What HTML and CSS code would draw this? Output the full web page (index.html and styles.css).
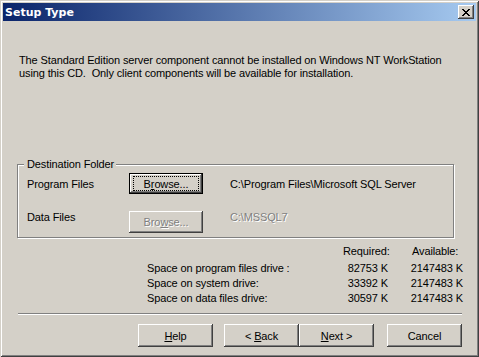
FILE: index.html
```html
<!DOCTYPE html>
<html lang="en">
<head>
    <meta charset="UTF-8">
    <title>Setup Type</title>
    <link rel="stylesheet" href="styles.css">
</head>
<body>
    <div class="window">
        <div class="titlebar">
            <span class="title">Setup Type</span>
            <span class="close">
                <svg width="8" height="7" viewBox="0 0 8 7" shape-rendering="crispEdges">
                    <path d="M0 0h2v1h-2zM6 0h2v1h-2zM1 1h2v1h-2zM5 1h2v1h-2zM2 2h4v1h-4zM3 3h2v1h-2zM2 4h4v1h-4zM1 5h2v1h-2zM5 5h2v1h-2zM0 6h2v1h-2zM6 6h2v1h-2z" fill="#000"/>
                </svg>
            </span>
        </div>

        <div class="content">
            <p class="message">
                The Standard Edition server component cannot be installed on Windows NT WorkStation<br>
                using this CD.&nbsp; Only client components will be available for installation.
            </p>

            <div class="group">
                <span class="legend">Destination Folder</span>
                <div class="folder-row">
                    <span class="label">Program Files</span>
                    <span class="btn default"><span class="focus">B<u>r</u>owse...</span></span>
                    <span class="path">C:\Program Files\Microsoft SQL Server</span>
                </div>
                <div class="folder-row disabled">
                    <span class="label">Data Files</span>
                    <span class="btn"><span>Bro<u>w</u>se...</span></span>
                    <span class="path">C:\MSSQL7</span>
                </div>
            </div>

            <div class="space">
                <span></span>
                <span class="head req">Required:</span>
                <span class="head avail">Available:</span>

                <span>Space on program files drive :</span>
                <span class="num">82753 K</span>
                <span class="num">2147483 K</span>

                <span>Space on system drive:</span>
                <span class="num">33392 K</span>
                <span class="num">2147483 K</span>

                <span>Space on data files drive:</span>
                <span class="num">30597 K</span>
                <span class="num">2147483 K</span>
            </div>

            <div class="separator"></div>

            <div class="buttons">
                <span class="btn help"><span><u>H</u>elp</span></span>
                <span class="btn back"><span>&lt; <u>B</u>ack</span></span>
                <span class="btn next"><span><u>N</u>ext &gt;</span></span>
                <span class="btn cancel"><span>Cancel</span></span>
            </div>
        </div>
    </div>
</body>
</html>
```

FILE: styles.css
```css
/* Classic Windows 2000 dialog */
body {
    margin: 0;
    font-family: "Liberation Sans", Arial, sans-serif;
    font-size: 11px;
    letter-spacing: -0.12px;
    color: #000;
}

.window {
    width: 479px;
    height: 357px;
    box-sizing: border-box;
    padding: 3px;
    background-color: #d4d0c8;
    box-shadow: inset 1px 1px #d4d0c8, inset -1px -1px #404040,
                inset 2px 2px #fff, inset -2px -2px #808080;
}

/* Title bar */
.titlebar {
    height: 18px;
    display: flex;
    align-items: center;
    justify-content: space-between;
    padding: 0 2px;
    background: linear-gradient(to right, #0a246a, #a6caf0);
}

.title {
    color: #fff;
    font-weight: bold;
    font-size: 11px;
    font-family: "DejaVu Sans", Verdana, sans-serif;
    letter-spacing: 0;
}

.close {
    width: 16px;
    height: 14px;
    box-sizing: border-box;
    display: flex;
    align-items: center;
    justify-content: center;
    background-color: #d4d0c8;
    box-shadow: inset -1px -1px #404040, inset 1px 1px #fff,
                inset -2px -2px #808080;
}

/* Dialog body */
.content {
    padding: 0 14px;
}

.message {
    margin: 33px 0 0 2px;
    line-height: 13px;
}

/* Group box with etched border */
.group {
    position: relative;
    margin-top: 84px;
    width: 437px;
    height: 74px;
    box-sizing: border-box;
    border: 1px solid #808080;
    box-shadow: inset 1px 1px #fff, 1px 1px #fff;
    padding: 8px 0 0 9px;
}

.legend {
    position: absolute;
    top: -7px;
    left: 6px;
    padding: 0 2px 0 3px;
    background-color: #d4d0c8;
    line-height: 13px;
}

.folder-row {
    display: flex;
    align-items: center;
    height: 21px;
}

.folder-row + .folder-row {
    margin-top: 17px;
    height: 22px;
    align-items: flex-start;
    line-height: 13px;
}

.folder-row .label {
    width: 102px;
}

.folder-row .path {
    margin-left: 27px;
}

.disabled .btn,
.disabled .path {
    color: #808080;
    text-shadow: 1px 1px #fff;
}

/* Buttons */
.btn {
    display: flex;
    align-items: center;
    justify-content: center;
    width: 75px;
    height: 23px;
    box-sizing: border-box;
    background-color: #d4d0c8;
    box-shadow: inset -1px -1px #404040, inset 1px 1px #fff,
                inset -2px -2px #808080, inset 2px 2px #d4d0c8;
}

.folder-row .btn {
    width: 74px;
    height: 21px;
}

.folder-row.disabled .btn {
    height: 22px;
}

.btn.default {
    box-shadow: inset 0 0 0 1px #000, inset -2px -2px #404040,
                inset 2px 2px #fff, inset -3px -3px #808080;
}

.focus {
    display: flex;
    align-items: center;
    justify-content: center;
    width: 64px;
    height: 13px;
    outline: 1px dotted #000;
}

/* Disk space table */
.space {
    display: grid;
    grid-template-columns: 196px 45px 75px;
    margin: 6px 0 0 130px;
    line-height: 15px;
}

.space .head {
    margin-bottom: 2px;
}

.space .num,
.space .req {
    text-align: right;
}

.space .avail {
    padding-left: 24px;
}

.separator {
    margin: 7px 0 0 1px;
    border-top: 1px solid #808080;
    border-bottom: 1px solid #fff;
    height: 0;
}

.buttons {
    display: flex;
    justify-content: flex-end;
    margin-top: 9px;
}

.back {
    margin-left: 11px;
}

.cancel {
    margin-left: 13px;
}
```
